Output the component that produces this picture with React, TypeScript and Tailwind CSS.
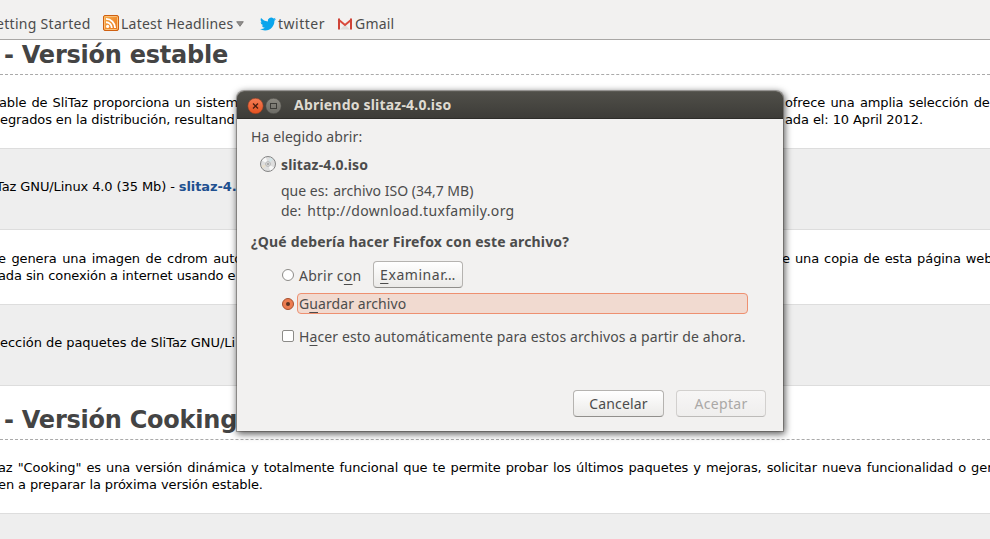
import type { ReactNode } from "react";

function Key({ children }: { children: ReactNode }) {
  return <span className="underline decoration-1 underline-offset-[3px]">{children}</span>;
}

function RssIcon() {
  return (
    <svg width="16" height="16" viewBox="0 0 16 16" className="block">
      <defs>
        <linearGradient id="rss" x1="0" y1="0" x2="1" y2="1">
          <stop offset="0" stopColor="#f9b04a" />
          <stop offset="1" stopColor="#e8701a" />
        </linearGradient>
      </defs>
      <rect x="0.5" y="0.5" width="15" height="15" rx="1.5" fill="url(#rss)" stroke="#cf6011" />
      <rect x="1.5" y="1.5" width="13" height="13" rx="1" fill="none" stroke="#fbc27a" />
      <circle cx="4.6" cy="11.4" r="1.6" fill="#fff" />
      <path d="M3 7.2a5.8 5.8 0 0 1 5.8 5.8M3 3.9a9.1 9.1 0 0 1 9.1 9.1" fill="none" stroke="#fff" strokeWidth="1.9" />
    </svg>
  );
}

function TwitterIcon() {
  return (
    <svg width="16" height="16" viewBox="0 0 24 24" className="block">
      <path
        fill="#0aa5ec"
        d="M23.95 4.57a10 10 0 0 1-2.82.77 4.96 4.96 0 0 0 2.16-2.72c-.95.55-2 .96-3.13 1.18a4.92 4.92 0 0 0-8.38 4.48C7.69 8.1 4.07 6.13 1.64 3.16a4.82 4.82 0 0 0-.67 2.48c0 1.71.87 3.21 2.19 4.1a4.9 4.9 0 0 1-2.23-.62v.06a4.92 4.92 0 0 0 3.95 4.83 5 5 0 0 1-2.21.08 4.94 4.94 0 0 0 4.6 3.42A9.87 9.87 0 0 1 0 19.54a14 14 0 0 0 7.55 2.21c9.05 0 14-7.5 14-13.98 0-.21 0-.42-.02-.63a9.94 9.94 0 0 0 2.46-2.55z"
      />
    </svg>
  );
}

function GmailIcon() {
  return (
    <svg width="16" height="16" viewBox="0 0 16 16" className="block">
      <path d="M1 2.5h14v11H1z" fill="#f3f1f0" />
      <path d="M3 13.5 8 8.6l5 4.9z" fill="#dedcdb" />
      <path d="M1.4 3.4 8 9l6.6-5.6" fill="none" stroke="#d9493c" strokeWidth="2" />
      <path d="M1 2.5h2v11H1zM13 2.5h2v11h-2z" fill="#cf4438" />
    </svg>
  );
}

function DiscIcon() {
  return (
    <svg width="16" height="16" viewBox="0 0 16 16" className="block">
      <circle cx="8" cy="8" r="7.5" fill="#dedede" stroke="#858585" />
      <path d="M8 8 2 4.6A7 7 0 0 1 6 1.4z" fill="#f7f7f7" />
      <path d="M8 8 14 11.4A7 7 0 0 1 10 14.6z" fill="#f7f7f7" />
      <path d="M8 8 10 1.5A7 7 0 0 1 13 3.6z" fill="#d5e4e6" />
      <path d="M8 8 3 12.6A7 7 0 0 1 1.5 9.6z" fill="#e8e0cf" />
      <circle cx="8" cy="8" r="2.4" fill="#ececec" stroke="#aaa" strokeWidth="0.8" />
      <circle cx="8" cy="8" r="0.9" fill="#fff" stroke="#777" strokeWidth="0.7" />
    </svg>
  );
}

function Bookmarks() {
  return (
    <header className="flex h-10 items-start border-b border-[#a9a7a5] bg-[#f2f1f0] pt-[14px] font-['Noto_Sans',sans-serif] text-[14px] leading-5 whitespace-pre text-[#4c4c4c]">
      <span className="-ml-[4px] w-[107px] tracking-[0.3px]">etting Started</span>
      <span className="mt-px w-[18px]"><RssIcon /></span>
      <span className="w-[115px] tracking-[0.23px]">Latest Headlines</span>
      <svg width="8" height="6" viewBox="0 0 8 6" className="mt-[7px] block">
        <path d="M0.7 0.7h6.6L4 5.3z" fill="#918f8d" stroke="#6e6c6a" strokeWidth="0.8" />
      </svg>
      <span className="mt-[2px] ml-4 w-[18px]"><TwitterIcon /></span>
      <span className="w-[59px] tracking-[0.5px]">twitter</span>
      <span className="mt-[2px] w-[18px]"><GmailIcon /></span>
      <span className="tracking-[0.2px]">Gmail</span>
    </header>
  );
}

function Heading({ children }: { children: ReactNode }) {
  return (
    <h2 className="h-[35px] border-b border-dashed border-[#aaaaaa] pt-px pl-1 text-2xl leading-7 font-bold tracking-[-0.24px] whitespace-pre text-[#444444]">
      {children}
    </h2>
  );
}

function Page() {
  return (
    <main className="h-[499px] overflow-hidden bg-white font-['DejaVu_Sans',sans-serif] text-[13px] leading-[17px] tracking-[-0.1px] whitespace-pre text-black">
      <Heading>- Versión estable</Heading>
      <section className="flex h-[73px] justify-between pt-[19px]">
        <div className="w-[237px] overflow-hidden">
          <p className="-ml-[1px] [word-spacing:1px]">able de SliTaz proporciona un sistem</p>
          <p>egrados en la distribución, resultand</p>
        </div>
        <div className="w-[205px]">
          <p className="[word-spacing:1.3px]">ofrece una amplia selección de</p>
          <p>ada el: 10 April 2012.</p>
        </div>
      </section>
      <section className="h-[82px] border-y border-[#dddddd] bg-[#eeeeee] pt-[29px]">
        <p className="-ml-1 w-[240px] overflow-hidden">
          Taz GNU/Linux 4.0 (35 Mb) - <b className="text-[#215090]">slitaz-4.0.iso</b>
        </p>
      </section>
      <section className="flex h-[74px] justify-between pt-5">
        <div className="w-[237px] overflow-hidden">
          <p className="-ml-[2px] [word-spacing:1.5px]">e genera una imagen de cdrom auto</p>
          <p className="-ml-[2px]">ada sin conexión a internet usando e</p>
        </div>
        <p className="w-[208px] [word-spacing:1px]">e una copia de esta página web</p>
      </section>
      <section className="h-[82px] border-y border-[#dddddd] bg-[#eeeeee] pt-[29px]">
        <p className="tracking-[-0.04px]">ección de paquetes de SliTaz GNU/Li</p>
      </section>
      <div className="pt-[19px]">
        <Heading>- Versión Cooking</Heading>
      </div>
      <section className="h-[73px] pt-[19px]">
        <p className="-ml-[2px] [word-spacing:1.05px]">
          az "Cooking" es una versión dinámica y totalmente funcional que te permite probar los últimos paquetes y mejoras, solicitar nueva funcionalidad o gen
        </p>
        <p className="-ml-[2px]">en a preparar la próxima versión estable.</p>
      </section>
      <section className="h-[82px] border-y border-[#dddddd] bg-[#eeeeee]" />
    </main>
  );
}

function Dialog() {
  return (
    <div
      role="dialog"
      className="absolute top-[91px] left-[237px] h-[340px] w-[546px] overflow-visible rounded-t-[7px] bg-[#f2f1f0] font-['Noto_Sans',sans-serif] text-[14px] leading-5 whitespace-pre text-[#4c4c4c] shadow-[0_0_0_1px_rgba(60,55,50,0.35),1px_2px_7px_1px_rgba(0,0,0,0.65)]"
    >
      <div className="flex h-7 items-center rounded-t-[7px] border-t border-b border-t-[#5b5a54] border-b-[#2e2d2a] bg-linear-to-b from-[#504f49] to-[#3d3c38] pl-[10px]">
        <svg width="36" height="18" viewBox="0 0 36 18" className="mt-px block">
          <defs>
            <linearGradient id="close" x1="0" y1="0" x2="0" y2="1">
              <stop offset="0" stopColor="#f67d55" />
              <stop offset="1" stopColor="#e4511f" />
            </linearGradient>
            <linearGradient id="max" x1="0" y1="0" x2="0" y2="1">
              <stop offset="0" stopColor="#8b8981" />
              <stop offset="1" stopColor="#6d6c66" />
            </linearGradient>
          </defs>
          <circle cx="8.5" cy="9" r="7.7" fill="url(#close)" stroke="#8c3b20" strokeWidth="0.5" />
          <path d="m6 6.5 5 5m0-5-5 5" stroke="#4a1d10" strokeWidth="1.3" />
          <circle cx="26.5" cy="9" r="7.7" fill="url(#max)" stroke="#4a4944" strokeWidth="0.5" />
          <rect x="23.5" y="6.5" width="6" height="5" fill="none" stroke="#3c3b37" />
        </svg>
        <h1 className="ml-[11px] text-[14px] font-bold tracking-[0.2px] text-[#dfdbd2]">Abriendo slitaz-4.0.iso</h1>
      </div>
      <div className="pt-2 pl-[14px]">
        <p className="tracking-[0.1px]">Ha elegido abrir:</p>
        <div className="mt-2 ml-[9px] flex">
          <span className="mt-px"><DiscIcon /></span>
          <b className="ml-[5px] tracking-[0.15px]">slitaz-4.0.iso</b>
        </div>
        <div className="mt-[6px] ml-[30px]">
          <p>que es:<span className="ml-[5px]">archivo ISO (34,7 MB)</span></p>
          <p>de:<span className="ml-[6px] tracking-[0.34px]">http://download.tuxfamily.org</span></p>
        </div>
        <p className="mt-[11px] font-bold tracking-[0.16px]">¿Qué debería hacer Firefox con este archivo?</p>
        <div className="mt-[9px] ml-[31px] flex h-[27px] items-center">
          <span className="size-3 rounded-full border border-[#8c8b88] bg-white" />
          <span className="mt-[2px] ml-[5px] w-[74px] tracking-[0.25px]">Abrir c<Key>o</Key>n</span>
          <button className="h-[27px] w-[90px] rounded-[4px] border border-[#b5b3b0] border-b-[#918f8c] bg-linear-to-b from-white to-[#ebeae8] tracking-[0.55px]">
            <Key>E</Key>xaminar…
          </button>
        </div>
        <div className="mt-[5px] ml-[31px] flex items-center">
          <span className="flex size-3 items-center justify-center rounded-full border border-[#a8502f] bg-[#ec7c50]">
            <span className="size-1 rounded-full bg-[#5c3222]" />
          </span>
          <span className="ml-[3px] h-[21px] w-[451px] rounded-[4px] border border-[#ee9070] bg-[#f1dad0] pl-px leading-[19px] tracking-[0.08px]">
            G<Key>u</Key>ardar archivo
          </span>
        </div>
        <div className="mt-[13px] ml-[31px] flex items-center">
          <span className="mb-[2px] size-3 rounded-[2px] border border-[#8c8b88] bg-white" />
          <span className="ml-[5px] tracking-[0.12px]">H<Key>a</Key>cer esto automáticamente para estos archivos a partir de ahora.</span>
        </div>
      </div>
      <div className="mt-[43px] ml-[336px] flex gap-3">
        <button className="h-[27px] w-[91px] rounded-[4px] border border-[#b5b3b0] border-b-[#918f8c] bg-linear-to-b from-white to-[#ebeae8] tracking-[0.15px]">Cancelar</button>
        <button className="h-[27px] w-[90px] rounded-[4px] border border-[#d2d0ce] border-b-[#bdbbb9] bg-linear-to-b from-[#f7f6f6] to-[#efeeed] tracking-[0.3px] text-[#aaa8a6]">Aceptar</button>
      </div>
    </div>
  );
}

export default function App() {
  return (
    <div className="relative h-[539px] w-[990px] overflow-hidden">
      <Bookmarks />
      <Page />
      <Dialog />
    </div>
  );
}
